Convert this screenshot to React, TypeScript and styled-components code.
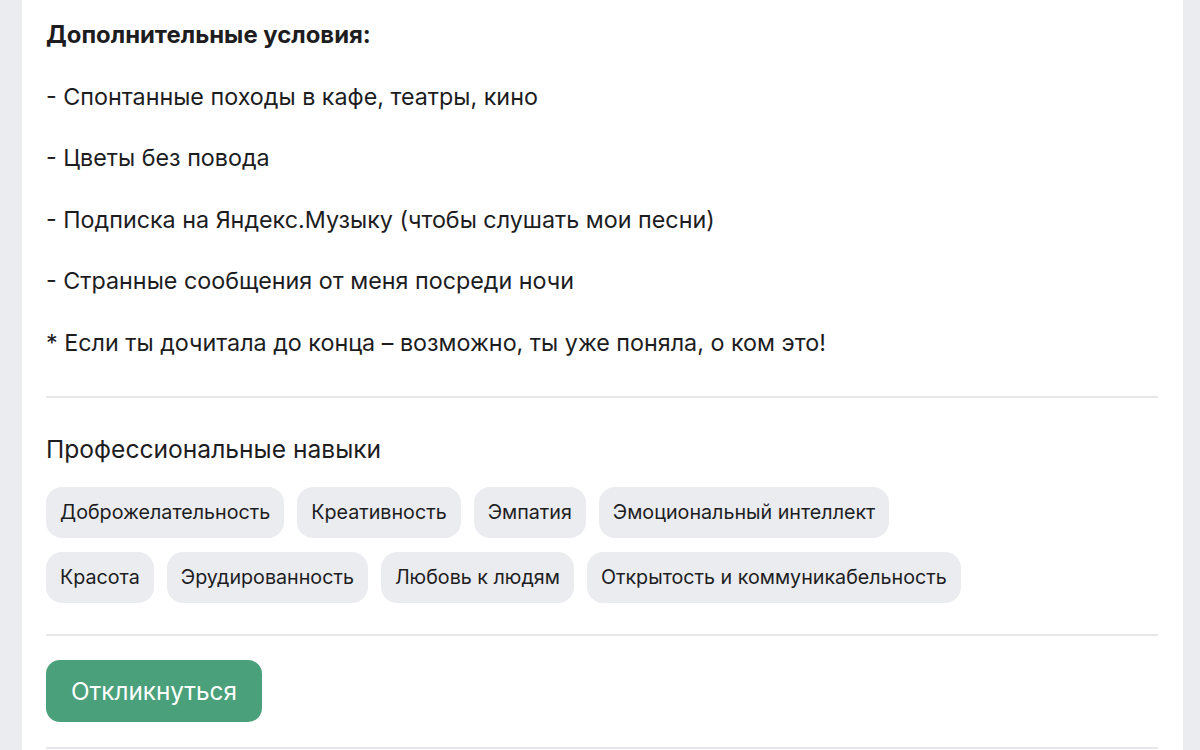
import React from "react";
import styled, { createGlobalStyle } from "styled-components";

const Global = createGlobalStyle`
  html, body { margin: 0; padding: 0; background: #ebecf0; }
  body { font-family: Inter, "Noto Sans", "Liberation Sans", sans-serif; color: #1d1d1f; -webkit-font-smoothing: antialiased; }
`;

const Page = styled.div`
  display: flex;
  padding: 0 17px 0 22px;
  height: 750px;
  overflow: hidden;
`;

const Card = styled.main`
  flex: 1;
  background: #ffffff;
  padding: 19px 25px 0 24px;
  display: flex;
  flex-direction: column;
`;

const Heading = styled.h3`
  margin: 0 0 30px;
  font-size: 23.9px;
  line-height: 31.5px;
  font-weight: 700;
`;

const Para = styled.p`
  margin: 0 0 30px;
  font-size: 23.3px;
  line-height: 31.5px;
  font-weight: 400;
  &:last-of-type { margin-bottom: 0; }
`;

const Divider = styled.hr<{ $top: number; $bottom: number }>`
  border: 0;
  height: 2px;
  background: #e6e7ea;
  margin: ${(p) => p.$top}px 0 ${(p) => p.$bottom}px;
`;

const SectionTitle = styled.h4`
  margin: 0 0 21px;
  font-size: 24.6px;
  line-height: 31.5px;
  font-weight: 400;
`;

const Chips = styled.div`
  display: flex;
  flex-wrap: wrap;
  gap: 14px 13px;
  max-width: 930px;
`;

const Chip = styled.span`
  display: inline-flex;
  align-items: center;
  height: 51px;
  padding: 0 14px;
  border-radius: 16px;
  background: #ebecf0;
  font-size: 19.7px;
  color: #1d1d1f;
`;

const Action = styled.button`
  align-self: flex-start;
  height: 62px;
  padding: 0 25px;
  border: 0;
  border-radius: 14px;
  background: #4aa07a;
  color: #ffffff;
  font-family: inherit;
  font-size: 24.3px;
  font-weight: 400;
  cursor: pointer;
`;

const lines = [
  "- Спонтанные походы в кафе, театры, кино",
  "- Цветы без повода",
  "- Подписка на Яндекс.Музыку (чтобы слушать мои песни)",
  "- Странные сообщения от меня посреди ночи",
  "* Если ты дочитала до конца – возможно, ты уже поняла, о ком это!",
];

const skills = [
  "Доброжелательность",
  "Креативность",
  "Эмпатия",
  "Эмоциональный интеллект",
  "Красота",
  "Эрудированность",
  "Любовь к людям",
  "Открытость и коммуникабельность",
];

export default function App() {
  return (
    <>
      <Global />
      <Page>
        <Card>
          <Heading>Дополнительные условия:</Heading>
          {lines.map((l) => (
            <Para key={l}>{l}</Para>
          ))}
          <Divider $top={38} $bottom={36} />
          <SectionTitle>Профессиональные навыки</SectionTitle>
          <Chips>
            {skills.map((s) => (
              <Chip key={s}>{s}</Chip>
            ))}
          </Chips>
          <Divider $top={31} $bottom={24} />
          <Action>Откликнуться</Action>
          <Divider $top={25} $bottom={0} />
        </Card>
      </Page>
    </>
  );
}
